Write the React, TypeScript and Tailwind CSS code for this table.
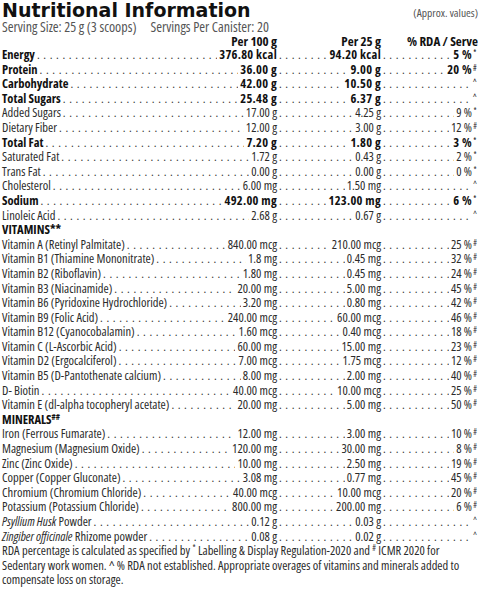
type Row = {
  label: React.ReactNode
  per100?: string
  per25?: string
  rda?: string
  mark?: string
  bold?: boolean
  heading?: boolean
}

const ROWS: Row[] = [
  { label: 'Energy', per100: '376.80 kcal', per25: '94.20 kcal', rda: '5 %', mark: '*', bold: true },
  { label: 'Protein', per100: '36.00 g', per25: '9.00 g', rda: '20 %', mark: '#', bold: true },
  { label: 'Carbohydrate', per100: '42.00 g', per25: '10.50 g', mark: '^', bold: true },
  { label: 'Total Sugars', per100: '25.48 g', per25: '6.37 g', mark: '^', bold: true },
  { label: 'Added Sugars', per100: '17.00 g', per25: '4.25 g', rda: '9 %', mark: '*' },
  { label: 'Dietary Fiber', per100: '12.00 g', per25: '3.00 g', rda: '12 %', mark: '#' },
  { label: 'Total Fat', per100: '7.20 g', per25: '1.80 g', rda: '3 %', mark: '*', bold: true },
  { label: 'Saturated Fat', per100: '1.72 g', per25: '0.43 g', rda: '2 %', mark: '*' },
  { label: 'Trans Fat', per100: '0.00 g', per25: '0.00 g', rda: '0 %', mark: '*' },
  { label: 'Cholesterol', per100: '6.00 mg', per25: '1.50 mg', mark: '^' },
  { label: 'Sodium', per100: '492.00 mg', per25: '123.00 mg', rda: '6 %', mark: '*', bold: true },
  { label: 'Linoleic Acid', per100: '2.68 g', per25: '0.67 g', mark: '^' },
  { label: <>VITAMINS**</>, heading: true },
  { label: 'Vitamin A (Retinyl Palmitate)', per100: '840.00 mcg', per25: '210.00 mcg', rda: '25 %', mark: '#' },
  { label: 'Vitamin B1 (Thiamine Mononitrate)', per100: '1.8 mg', per25: '0.45 mg', rda: '32 %', mark: '#' },
  { label: 'Vitamin B2 (Riboflavin)', per100: '1.80 mg', per25: '0.45 mg', rda: '24 %', mark: '#' },
  { label: 'Vitamin B3 (Niacinamide)', per100: '20.00 mg', per25: '5.00 mg', rda: '45 %', mark: '#' },
  { label: 'Vitamin B6 (Pyridoxine Hydrochloride)', per100: '3.20 mg', per25: '0.80 mg', rda: '42 %', mark: '#' },
  { label: 'Vitamin B9 (Folic Acid)', per100: '240.00 mcg', per25: '60.00 mcg', rda: '46 %', mark: '#' },
  { label: 'Vitamin B12 (Cyanocobalamin)', per100: '1.60 mcg', per25: '0.40 mcg', rda: '18 %', mark: '#' },
  { label: 'Vitamin C (L-Ascorbic Acid)', per100: '60.00 mg', per25: '15.00 mg', rda: '23 %', mark: '#' },
  { label: 'Vitamin D2 (Ergocalciferol)', per100: '7.00 mcg', per25: '1.75 mcg', rda: '12 %', mark: '#' },
  { label: 'Vitamin B5 (D-Pantothenate calcium)', per100: '8.00 mg', per25: '2.00 mg', rda: '40 %', mark: '#' },
  { label: 'D- Biotin', per100: '40.00 mcg', per25: '10.00 mcg', rda: '25 %', mark: '#' },
  { label: 'Vitamin E (dl-alpha tocopheryl acetate)', per100: '20.00 mg', per25: '5.00 mg', rda: '50 %', mark: '#' },
  { label: <>MINERALS<sup className="text-[8px]">##</sup></>, heading: true },
  { label: 'Iron (Ferrous Fumarate)', per100: '12.00 mg', per25: '3.00 mg', rda: '10 %', mark: '#' },
  { label: 'Magnesium (Magnesium Oxide)', per100: '120.00 mg', per25: '30.00 mg', rda: '8 %', mark: '#' },
  { label: 'Zinc (Zinc Oxide)', per100: '10.00 mg', per25: '2.50 mg', rda: '19 %', mark: '#' },
  { label: 'Copper (Copper Gluconate)', per100: '3.08 mg', per25: '0.77 mg', rda: '45 %', mark: '#' },
  { label: 'Chromium (Chromium Chloride)', per100: '40.00 mcg', per25: '10.00 mcg', rda: '20 %', mark: '#' },
  { label: 'Potassium (Potassium Chloride)', per100: '800.00 mg', per25: '200.00 mg', rda: '6 %', mark: '#' },
  { label: <><i>Psyllium Husk</i> Powder</>, per100: '0.12 g', per25: '0.03 g', mark: '^' },
  { label: <><i>Zingiber officinale</i> Rhizome powder</>, per100: '0.08 g', per25: '0.02 g', mark: '^' },
]

const DOTS = '.'.repeat(80)

// dot leader between a label and its value
const Leader = () => (
  <span className="min-w-0 flex-1 overflow-hidden whitespace-nowrap pl-[2px] font-normal tracking-[3.6px] text-[#333]">
    {DOTS}
  </span>
)

const Line = ({ row }: { row: Row }) => {
  if (row.heading) {
    return <div className="h-[14.6px] font-bold text-[#111]">{row.label}</div>
  }
  return (
    <div className={`flex h-[14.6px] ${row.bold ? 'font-bold tracking-[0.3px] text-[#111]' : 'font-medium text-[#2b2b2b]'}`}>
      <div className="flex w-[275px] shrink-0">
        <span className="whitespace-nowrap tracking-normal">{row.label}</span>
        <Leader />
        <span className="whitespace-nowrap pl-[2px]">{row.per100}</span>
      </div>
      <div className="flex w-[104px] shrink-0">
        <Leader />
        <span className="whitespace-nowrap pl-[2px]">{row.per25}</span>
      </div>
      <div className="flex min-w-0 flex-1">
        <Leader />
        <span className="whitespace-nowrap pl-[2px]">{row.rda}</span>
        <span className="w-[6px] shrink-0 text-center text-[8px] leading-[10px] font-normal">{row.mark}</span>
      </div>
    </div>
  )
}

export default function App() {
  return (
    <div className="h-[592px] w-[480px] overflow-hidden bg-white px-[2px] font-['Open_Sans',sans-serif] text-[12.5px] leading-[14.6px] [font-stretch:75%]">
      <div className="flex h-[20px] items-end justify-between">
        <h1 className="font-['DejaVu_Sans',sans-serif] text-[19px] leading-[20px] font-bold text-[#111] [font-stretch:100%]">
          Nutritional Information
        </h1>
        <span className="text-[11.5px] leading-[14px] text-[#555]">(Approx. values)</span>
      </div>
      <div className="flex h-[14px] gap-[14px] text-[14px] leading-[14px] text-[#555]">
        <span>Serving Size: 25 g (3 scoops)</span>
        <span>Servings Per Canister: 20</span>
      </div>
      <div className="flex h-[14px] text-[13px] font-bold text-[#111]">
        <span className="w-[275px] shrink-0 text-right">Per 100 g</span>
        <span className="w-[104px] shrink-0 text-right">Per 25 g</span>
        <span className="flex-1 text-right">% RDA / Serve</span>
      </div>
      {ROWS.map((row, i) => (
        <Line key={i} row={row} />
      ))}
      <p className="font-medium text-[#2b2b2b]">
        RDA percentage is calculated as specified by <sup className="text-[8px]">*</sup> Labelling &amp; Display
        Regulation-2020 and <sup className="text-[8px]">#</sup> ICMR 2020 for
        <br />
        Sedentary work women. ^ % RDA not established. Appropriate overages of vitamins and minerals added to
        <br />
        compensate loss on storage.
      </p>
    </div>
  )
}
